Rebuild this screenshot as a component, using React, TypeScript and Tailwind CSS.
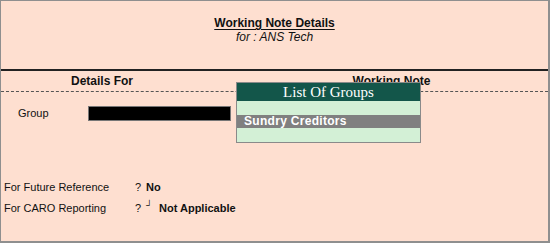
export default function App() {
  return (
    <div className="w-[550px] h-[243px] bg-[#fedfd0] border border-[#8f8f8f] border-r-2 border-b-2 font-['Liberation_Sans',Arial,sans-serif] text-[#111] text-[11px] relative overflow-hidden">
      <div className="flex flex-col items-center pt-[15px]">
        <div className="font-bold text-[12px] leading-[14px] underline underline-offset-2">Working Note Details</div>
        <div className="italic text-[12px] leading-[14px]">for : ANS Tech</div>
      </div>
      <div className="mt-[25px] border-t-2 border-[#222]" />
      <div className="flex h-[21px] items-center font-bold text-[12px] border-b border-dashed border-[#555]">
        <div className="w-[202px] text-center">Details For</div>
        <div className="flex-1 text-center pl-[32px]">Working Note</div>
      </div>
      <div className="flex items-center mt-[14px] h-[15px]">
        <div className="w-[87px] pl-[17px]">Group</div>
        <div className="w-[143px] h-[15px] bg-black border border-[#777]" />
      </div>
      <div className="mt-[59px] flex flex-col gap-[6px]">
        <div className="flex items-center h-[15px]">
          <div className="w-[134px] pl-[3px]">For Future Reference</div>
          <div className="w-[11px]">?</div>
          <div className="font-bold">No</div>
        </div>
        <div className="flex items-center h-[15px]">
          <div className="w-[134px] pl-[3px]">For CARO Reporting</div>
          <div className="w-[11px]">?</div>
          <div className="w-[13px] text-[9px] -mt-[5px]">┘</div>
          <div className="font-bold">Not Applicable</div>
        </div>
      </div>
      <div className="absolute left-[235px] top-[81px] w-[185px] h-[61px] border border-[#8a8a8a] bg-[#d3f0d6] flex flex-col">
        <div className="h-[18px] bg-[#13564a] text-white text-center font-['Liberation_Serif','Times_New_Roman',serif] text-[15px] leading-[18px]">List Of Groups</div>
        <div className="h-[14px]" />
        <div className="h-[13px] bg-[#808080] text-white font-bold text-[12px] leading-[13px] pl-[7px] tracking-[0.3px]">Sundry Creditors</div>
      </div>
    </div>
  );
}
